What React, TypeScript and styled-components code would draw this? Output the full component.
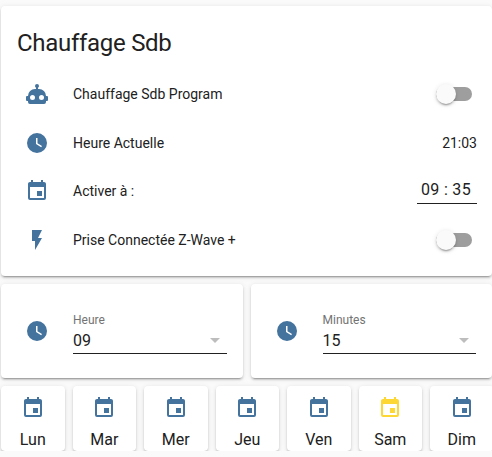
import React from "react";
import styled, { createGlobalStyle } from "styled-components";

const Global = createGlobalStyle`
  html, body { margin: 0; padding: 0; background: #fafafa; overflow: hidden; }
  body { font-family: Roboto, "Liberation Sans", sans-serif; color: #212121; }
`;

const Page = styled.div`
  width: 491px;
  margin-left: 1px;
  padding-top: 6px;
  display: flex;
  flex-direction: column;
  gap: 8px;
`;

const Card = styled.div`
  background: #fff;
  border-radius: 4px;
  box-shadow: 0 2px 2px 0 rgba(0,0,0,.14), 0 1px 5px 0 rgba(0,0,0,.12), 0 3px 1px -2px rgba(0,0,0,.2);
`;

const MainCard = styled(Card)`
  height: 270px;
  box-sizing: border-box;
  padding: 0 15px 0 16px;
`;

const Title = styled.div`
  font-size: 24px;
  line-height: 32px;
  padding-top: 21px;
  height: 64px;
  box-sizing: border-box;
  letter-spacing: -0.012em;
`;

const Rows = styled.div`
  display: flex;
  flex-direction: column;
`;

const Row = styled.div`
  display: flex;
  align-items: center;
  height: 48.5px;
  font-size: 14px;
`;

const IconSlot = styled.div`
  width: 40px;
  height: 40px;
  flex: none;
  display: flex;
  align-items: center;
  justify-content: center;
`;

const Name = styled.div`
  flex: 1;
  margin-left: 16px;
`;

const Icon = styled.svg<{ $color?: string }>`
  width: 24px;
  height: 24px;
  display: block;
  fill: ${(p) => p.$color ?? "#44739e"};
`;

const Toggle = styled.div`
  position: relative;
  width: 36px;
  height: 14px;
  margin-right: 5px;
  border-radius: 7px;
  background: #9e9e9e;
`;

const Thumb = styled.div`
  position: absolute;
  left: 0;
  top: -3px;
  width: 20px;
  height: 20px;
  border-radius: 50%;
  background: #fafafa;
  box-shadow: 0 3px 1px -2px rgba(0,0,0,.2), 0 2px 2px 0 rgba(0,0,0,.14), 0 1px 5px 0 rgba(0,0,0,.12);
`;

const TimeInput = styled.div`
  width: 60px;
  height: 26px;
  padding-right: 2px;
  box-sizing: border-box;
  border-bottom: 1px solid #212121;
  font-size: 16px;
  line-height: 24px;
  text-align: center;
  letter-spacing: 0.3px;
  white-space: pre;
`;

const SelectRow = styled.div`
  display: flex;
  gap: 8px;
`;

const SelectCard = styled(Card)`
  flex: 1;
  height: 94px;
  box-sizing: border-box;
  padding: 0 16px;
  display: flex;
  align-items: center;
`;

const Field = styled.div`
  flex: 1;
  margin-left: 16px;
  margin-top: 3px;
  padding-top: 1px;
  height: 42px;
  box-sizing: border-box;
  border-bottom: 1px solid #212121;
  position: relative;
`;

const Label = styled.div`
  font-size: 12px;
  line-height: 14px;
  color: #737373;
`;

const Value = styled.div`
  font-size: 16px;
  line-height: 22px;
  margin-top: 3px;
`;

const Arrow = styled.div`
  position: absolute;
  right: 7px;
  top: 26px;
  width: 0;
  height: 0;
  border-left: 5px solid transparent;
  border-right: 5px solid transparent;
  border-top: 5px solid #bdbdbd;
`;

const Days = styled.div`
  display: grid;
  width: 492.5px;
  grid-template-columns: repeat(7, 1fr);
  gap: 8px;
`;

const DayCard = styled(Card)`
  height: 65px;
  display: flex;
  flex-direction: column;
  align-items: center;
  padding-top: 10px;
  box-sizing: border-box;
  font-size: 16px;
`;

const DayLabel = styled.div`
  margin-top: 10px;
  line-height: 19px;
`;

const P = {
  robot: "M12,2A2,2 0 0,1 14,4C14,4.74 13.6,5.39 13,5.73V7H14A7,7 0 0,1 21,14H22A1,1 0 0,1 23,15V18A1,1 0 0,1 22,19H21V20A2,2 0 0,1 19,22H5A2,2 0 0,1 3,20V19H2A1,1 0 0,1 1,18V15A1,1 0 0,1 2,14H3A7,7 0 0,1 10,7H11V5.73C10.4,5.39 10,4.74 10,4A2,2 0 0,1 12,2M7.5,13A2.5,2.5 0 0,0 5,15.5A2.5,2.5 0 0,0 7.5,18A2.5,2.5 0 0,0 10,15.5A2.5,2.5 0 0,0 7.5,13M16.5,13A2.5,2.5 0 0,0 14,15.5A2.5,2.5 0 0,0 16.5,18A2.5,2.5 0 0,0 19,15.5A2.5,2.5 0 0,0 16.5,13Z",
  clock: "M12,2A10,10 0 0,0 2,12A10,10 0 0,0 12,22A10,10 0 0,0 22,12A10,10 0 0,0 12,2M16.2,16.2L11,13V7H12.5V12.2L17,14.9L16.2,16.2Z",
  calendar: "M19,19H5V8H19M16,1V3H8V1H6V3H5C3.89,3 3,3.89 3,5V19A2,2 0 0,0 5,21H19A2,2 0 0,0 21,19V5C21,3.89 20.1,3 19,3H18V1M17,12H12V17H17V12Z",
  flash: "M7,2V13H10V22L17,10H13L17,2H7Z",
};

const Mdi = ({ d, color }: { d: string; color?: string }) => (
  <Icon viewBox="0 0 24 24" $color={color}>
    <path d={d} />
  </Icon>
);

const SwitchOff = () => (
  <Toggle>
    <Thumb />
  </Toggle>
);

const SelectBox = ({ label, value }: { label: string; value: string }) => (
  <SelectCard>
    <IconSlot>
      <Mdi d={P.clock} />
    </IconSlot>
    <Field>
      <Label>{label}</Label>
      <Value>{value}</Value>
      <Arrow />
    </Field>
  </SelectCard>
);

const days = [
  { name: "Lun" },
  { name: "Mar" },
  { name: "Mer" },
  { name: "Jeu" },
  { name: "Ven" },
  { name: "Sam", color: "#fdd835" },
  { name: "Dim" },
];

export default function App() {
  return (
    <>
      <Global />
      <Page>
        <MainCard>
          <Title>Chauffage Sdb</Title>
          <Rows>
            <Row>
              <IconSlot><Mdi d={P.robot} /></IconSlot>
              <Name>Chauffage Sdb Program</Name>
              <SwitchOff />
            </Row>
            <Row>
              <IconSlot><Mdi d={P.clock} /></IconSlot>
              <Name>Heure Actuelle</Name>
              <div>21:03</div>
            </Row>
            <Row>
              <IconSlot><Mdi d={P.calendar} /></IconSlot>
              <Name>Activer à :</Name>
              <TimeInput>09 : 35</TimeInput>
            </Row>
            <Row>
              <IconSlot><Mdi d={P.flash} /></IconSlot>
              <Name>Prise Connectée Z-Wave +</Name>
              <SwitchOff />
            </Row>
          </Rows>
        </MainCard>
        <SelectRow>
          <SelectBox label="Heure" value="09" />
          <SelectBox label="Minutes" value="15" />
        </SelectRow>
        <Days>
          {days.map((d) => (
            <DayCard key={d.name}>
              <Mdi d={P.calendar} color={d.color} />
              <DayLabel>{d.name}</DayLabel>
            </DayCard>
          ))}
        </Days>
      </Page>
    </>
  );
}
